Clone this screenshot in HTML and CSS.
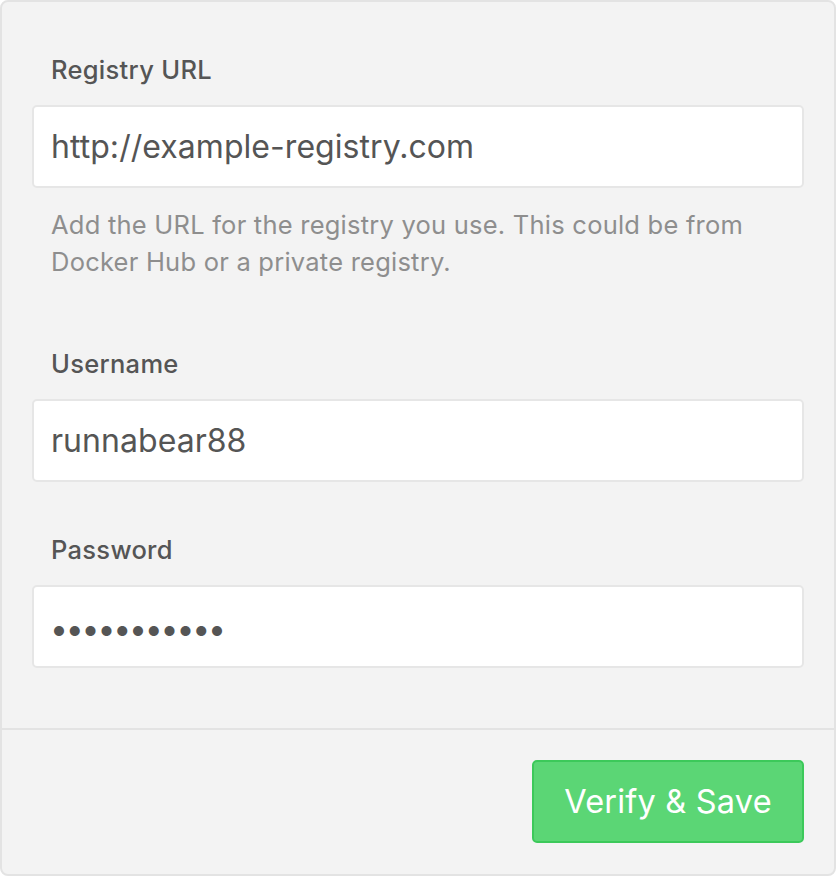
FILE: index.html
```html
<!DOCTYPE html>
<html>
<head>
<meta charset="utf-8">
<link rel="stylesheet" href="styles.css">
</head>
<body>
<div class="card">
  <div class="form">
    <div class="field">
      <div class="label">Registry URL</div>
      <div class="input">http://example-registry.com</div>
      <div class="help">Add the URL for the registry you use. This could be from Docker Hub or a private registry.</div>
    </div>
    <div class="field">
      <div class="label">Username</div>
      <div class="input">runnabear88</div>
    </div>
    <div class="field">
      <div class="label">Password</div>
      <div class="input dots">•••••••••••</div>
    </div>
  </div>
  <div class="footer">
    <button class="btn">Verify &amp; Save</button>
  </div>
</div>
</body>
</html>
```
FILE: styles.css
```css
html, body {
  margin: 0;
  padding: 0;
  background: #ffffff;
}
body {
  font-family: Inter, "Noto Sans", sans-serif;
  color: #555555;
}
.card {
  box-sizing: border-box;
  width: 836px;
  height: 876px;
  background: #f3f3f3;
  border: 2px solid #e3e3e3;
  border-radius: 8px;
  display: flex;
  flex-direction: column;
}
.form {
  padding: 52px 30px 60px 30px;
  display: flex;
  flex-direction: column;
  gap: 52px;
}
.field {
  display: flex;
  flex-direction: column;
}
.label {
  font-size: 25.5px;
  line-height: 32px;
  font-weight: 500;
  letter-spacing: 0.3px;
  color: #555555;
  padding-left: 19px;
  margin-bottom: 19px;
}
.input {
  box-sizing: border-box;
  height: 83px;
  background: #ffffff;
  border: 2px solid #e6e6e6;
  border-radius: 5px;
  padding: 0 17px;
  display: flex;
  align-items: center;
  font-size: 32px;
  letter-spacing: 0.05px;
  color: #555555;
}
.dots {
  letter-spacing: -2.2px;
  padding-top: 4px;
  padding-left: 16px;
}
.help {
  margin-top: 18px;
  margin-bottom: 16px;
  padding-left: 19px;
  font-size: 25.5px;
  line-height: 37px;
  letter-spacing: 0.23px;
  color: #8e8e8e;
}
.footer {
  border-top: 2px solid #e3e3e3;
  flex: 1;
  display: flex;
  justify-content: flex-end;
  align-items: flex-start;
  padding: 30px 30px 0 30px;
}
.btn {
  box-sizing: border-box;
  width: 272px;
  height: 83px;
  background: #5bd675;
  border: 2px solid #3cc95a;
  border-radius: 5px;
  color: #ffffff;
  font-family: Inter, "Noto Sans", sans-serif;
  font-size: 32.5px;
  letter-spacing: 0.2px;
  padding: 0;
}
```
